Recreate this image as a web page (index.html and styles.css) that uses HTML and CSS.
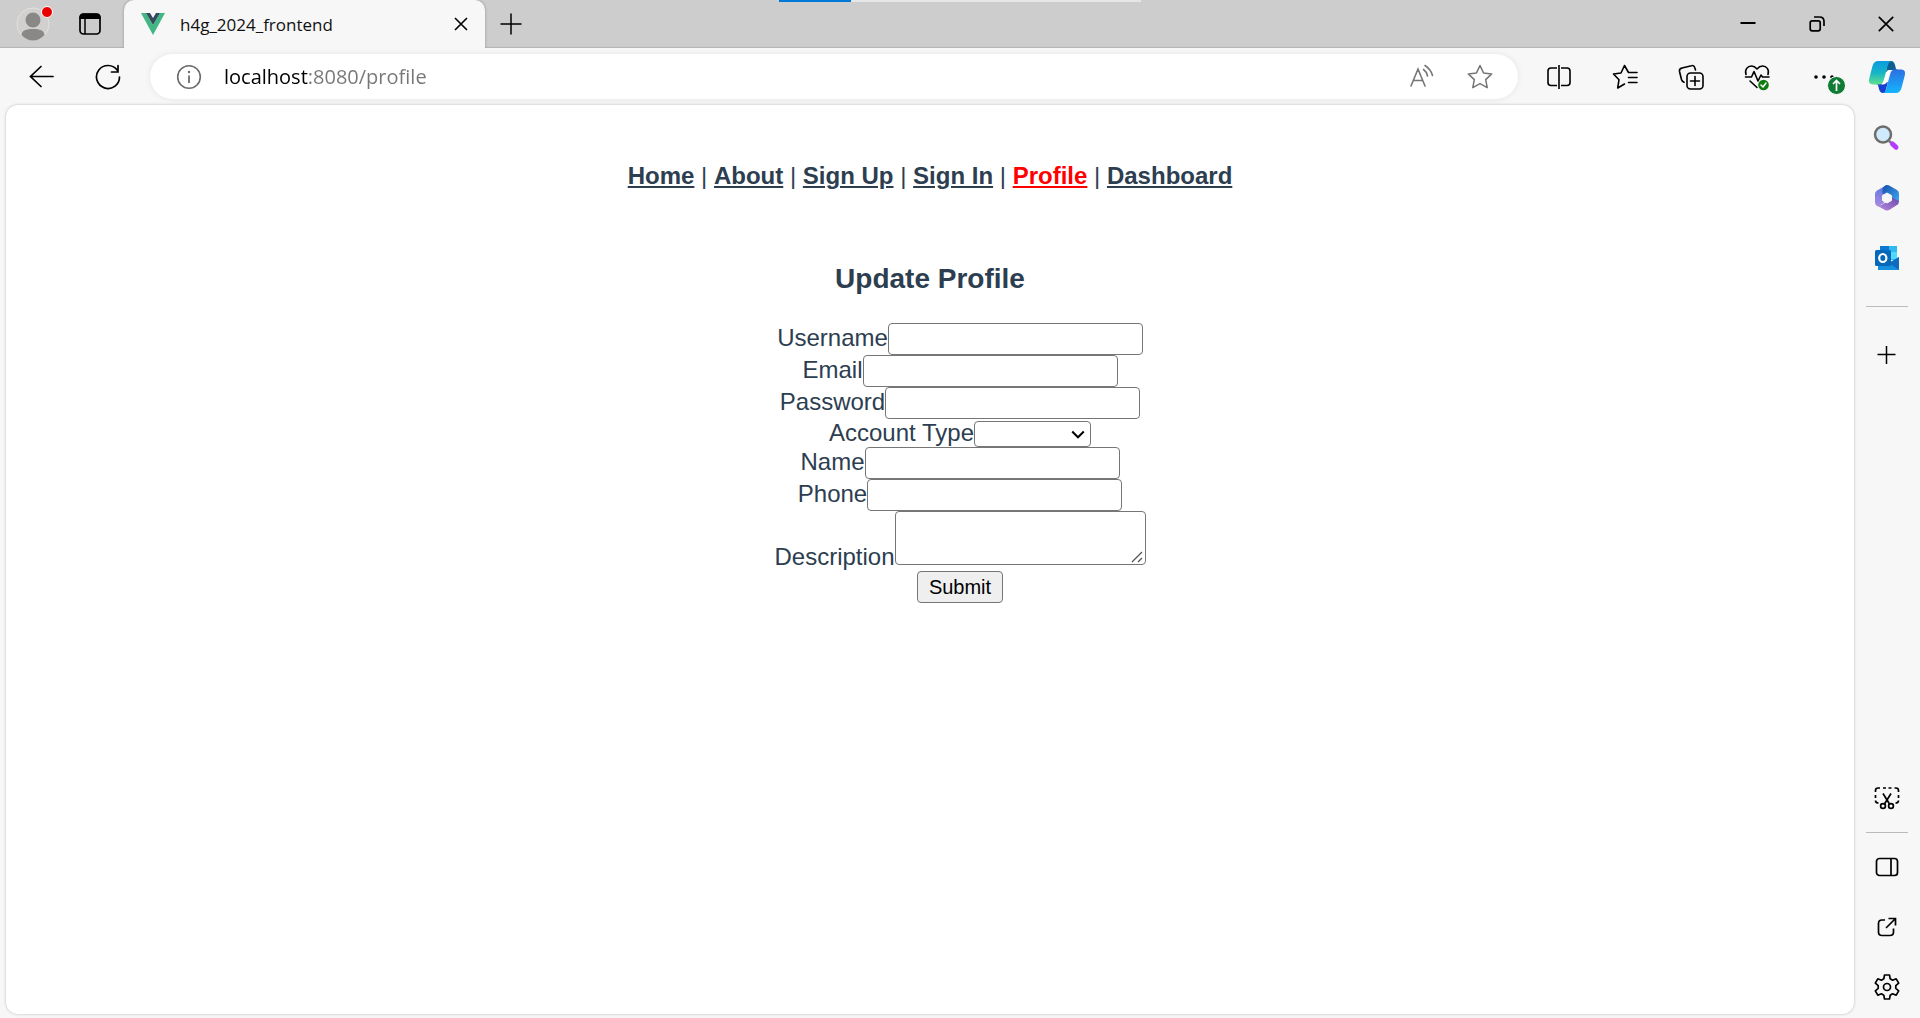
FILE: index.html
```html
<!DOCTYPE html>
<html lang="en">
<head>
  <meta charset="UTF-8">
  <meta name="viewport" content="width=device-width, initial-scale=1.0">
  <title>h4g_2024_frontend</title>
  <link rel="stylesheet" href="styles.css">
</head>
<body>
  <header class="tab-strip">
    <button class="avatar-btn" aria-label="Account">
      <svg width="40" height="40" viewBox="0 0 40 40">
        <circle cx="20" cy="20" r="16" fill="#d2d0ce" stroke="#e4e2e0"/>
        <circle cx="20" cy="16" r="7.5" fill="#8a8886"/>
        <path d="M8.500 31C9 26.500 13 25 20 25s11 1.500 11.500 6C28.500 34.500 24.500 36.500 20 36.500S11.500 34.500 8.500 31z" fill="#8a8886"/>
        <circle cx="34" cy="8" r="5.500" fill="#e60000" stroke="#fff"/>
      </svg>
    </button>
    <button class="workspace-btn" aria-label="Tab actions">
      <svg width="24" height="24" viewBox="0 0 24 24">
        <rect x="2" y="2" width="20" height="20" rx="3.500" fill="none" stroke="#000" stroke-width="1.700"/>
        <path d="M1.500 7V5q0-3.500 3.500-3.500h14q3.500 0 3.500 3.500v2z"/>
        <path d="M7 7v15" stroke="#000" stroke-width="1.500"/>
      </svg>
    </button>
    <div class="tab">
      <svg width="24" height="22" viewBox="0 0 24 22">
        <path d="M0 0h5l7 12 7-12h5L12 22z" fill="#41b883"/>
        <path d="M5 0h4l3 5 3-5h4l-7 12z" fill="#35495e"/>
      </svg>
      <span class="tab-title">h4g_2024_frontend</span>
      <button class="tab-close" aria-label="Close tab">
        <svg width="14" height="14" viewBox="0 0 14 14"><path d="M1 1l12 12M13 1L1 13" stroke="#000" stroke-width="1.600"/></svg>
      </button>
    </div>
    <button class="new-tab" aria-label="New tab">
      <svg width="22" height="22" viewBox="0 0 22 22"><path d="M11 .5v21M.5 11h21" stroke="#000" stroke-width="1.500"/></svg>
    </button>
    <div class="window-buttons">
      <button aria-label="Minimize">
        <svg width="16" height="16" viewBox="0 0 16 16"><path d="M.5 7h15" stroke="#000" stroke-width="2"/></svg>
      </button>
      <button aria-label="Restore">
        <svg width="16" height="16" viewBox="0 0 16 16" fill="none" stroke="#000" stroke-width="1.700">
          <rect x="1.200" y="4.800" width="10" height="10" rx="2"/>
          <path d="M5 1h5.500Q15 1 15 5.500V10"/>
        </svg>
      </button>
      <button aria-label="Close">
        <svg width="16" height="16" viewBox="0 0 16 16"><path d="M.8.8l14.400 14.400M15.200.8L.8 15.200" stroke="#000" stroke-width="1.700"/></svg>
      </button>
    </div>
    <div class="progress"><div class="progress-bar"></div></div>
  </header>

  <div class="toolbar">
    <button class="tool-btn" aria-label="Back">
      <svg width="26" height="26" viewBox="0 0 26 26" fill="none" stroke="#000" stroke-width="1.700" stroke-linecap="round"><path d="M24 12.500H1.500M12 2.500L1.500 12.500 12 22.500"/></svg>
    </button>
    <button class="tool-btn" aria-label="Refresh">
      <svg width="26" height="26" viewBox="0 0 26 26" fill="none" stroke="#000" stroke-width="1.700" stroke-linecap="round"><path d="M24.500 13A11.500 11.500 0 1 1 22.500 6.500M23 1.500V8h-6.500"/></svg>
    </button>
    <div class="address-bar">
      <button class="info-btn" aria-label="Site information">
        <svg width="26" height="26" viewBox="0 0 26 26"><circle cx="13" cy="13" r="11.300" fill="none" stroke="#6b6b6b" stroke-width="1.600"/><path d="M13 11.500v7.500" stroke="#6b6b6b" stroke-width="1.800"/><circle cx="13" cy="8" r="1.200" fill="#6b6b6b"/></svg>
      </button>
      <input class="url" type="text" value="localhost:8080/profile" aria-label="Address">
      <button class="bar-btn" aria-label="Read aloud">
        <svg width="26" height="26" viewBox="0 0 26 26" fill="none" stroke="#767676" stroke-width="1.600" stroke-linecap="round">
          <path d="M3 22L10 5l7 17M5.500 16.500h9M15.500 5.500q3 2 4 6.500M17 1.500q6 4 7.500 10"/>
        </svg>
      </button>
      <button class="bar-btn" aria-label="Add to favorites">
        <svg width="26" height="26" viewBox="0 0 26 26" fill="none" stroke="#767676" stroke-width="1.500" stroke-linejoin="round"><path d="M13 1.500l3.500 7.400 8.200 1-6 5.700 1.500 8.100-7.200-4-7.200 4 1.500-8.100-6-5.700 8.200-1z"/></svg>
      </button>
    </div>
    <button class="tool-btn" aria-label="Split screen">
      <svg width="26" height="26" viewBox="0 0 26 26" fill="none" stroke="#000" stroke-width="1.600"><path d="M13 1v24M11 4H5Q2 4 2 7v11.500q0 3 3 3h6M15 4h6q3 0 3 3v11.500q0 3-3 3h-6"/></svg>
    </button>
    <button class="tool-btn" aria-label="Favorites">
      <svg width="26" height="26" viewBox="0 0 26 26" fill="none" stroke="#000" stroke-width="1.600" stroke-linejoin="round" stroke-linecap="round"><path d="M16.500 8.500L12.500 1.500 9 9 1.500 10l5.500 5.700-1.300 8.300 6.800-4M16.500 8.500h8.500M16.500 13.500h8.500M16.500 18.500h8.500"/></svg>
    </button>
    <button class="tool-btn" aria-label="Collections">
      <svg width="26" height="26" viewBox="0 0 26 26" fill="none" stroke="#000" stroke-width="1.600" stroke-linecap="round"><rect x="9" y="9" width="16" height="16" rx="3.500"/><path d="M17 12.500v9M12.500 17h9M17.500 6l-.7-2.300q-.7-2.700-3.300-2L4 4Q1 4.700 1.500 7.500l2 8q.5 1.800 2.500 2.800"/></svg>
    </button>
    <button class="tool-btn" aria-label="Browser essentials">
      <svg width="28" height="28" viewBox="0 0 28 28" fill="none" stroke="#000" stroke-width="1.600" stroke-linecap="round" stroke-linejoin="round">
        <path d="M3 11.500C1.500 6.500 4.500 3 8.500 3q3 0 5.500 3 2.500-3 5.500-3c4 0 7 3.500 5.500 8.500M2.500 14h6l2.500-5.500 4 9.500 3-6 1.500 2H26M7 18l7 6.500"/>
        <circle cx="20.500" cy="22" r="5.300" fill="#107c10" stroke="none"/><path d="M18 22l2 2 3-4" stroke="#fff" stroke-width="1.500"/>
      </svg>
    </button>
    <button class="tool-btn" aria-label="Settings and more">
      <svg width="44" height="36" viewBox="0 0 44 36">
        <circle cx="15" cy="18" r="1.800"/><circle cx="23" cy="18" r="1.800"/><circle cx="31" cy="18" r="1.800"/>
        <circle cx="35.500" cy="26.500" r="9" fill="#0f7b35" stroke="#f7f7f7"/><path d="M35.500 32V21.500M32 25l3.500-3.500L39 25" fill="none" stroke="#fff" stroke-width="1.700"/>
      </svg>
    </button>
    <button class="copilot-btn" aria-label="Copilot">
      <svg width="38" height="34" viewBox="0 0 38 34">
        <defs>
          <linearGradient id="cp1" x1="0" y1="0" x2="0" y2="1"><stop offset="0" stop-color="#0a9be0"/><stop offset=".5" stop-color="#16b4c8"/><stop offset="1" stop-color="#62e08c"/></linearGradient>
          <linearGradient id="cp2" x1="0" y1="0" x2="0" y2="1"><stop offset="0" stop-color="#2c6fe0"/><stop offset="1" stop-color="#15b5ff"/></linearGradient>
        </defs>
        <path d="M20 1h3q3 0 4 4l1 4q1 1 3 1h-8l-5 2z" fill="#0d5f92"/>
        <path d="M17 33h-2q-3 0-4-4l-1-4q-1-1-3-1h8l5-2z" fill="#183fcf"/>
        <path d="M10 1h14q-3 0-4 3.500L15.500 21q-1 3.500-4.500 3.500H5Q-.5 24.500 1.500 17.500L4.500 6Q6 1 10 1z" fill="url(#cp1)"/>
        <path d="M28 33H14q3 0 4-3.500L22.500 13q1-3.500 4.500-3.500h6q5.500 0 3.500 7L33.500 28Q32 33 28 33z" fill="url(#cp2)"/>
        <path d="M20.500 10H24q-2 .5-3 4l-2.500 8q-.8 2.500-3.500 2.500h-2q2-.5 3-4l2.500-8q.5-2.500 2-2.500z" fill="#fff"/>
      </svg>
    </button>
  </div>

  <div class="main">
    <div class="page">
      <nav>
        <a href="#">Home</a> |
        <a href="#">About</a> |
        <a href="#">Sign Up</a> |
        <a href="#">Sign In</a> |
        <a href="#" class="active">Profile</a> |
        <a href="#">Dashboard</a>
      </nav>
      <h3>Update Profile</h3>
      <form>
        <ul>
          <li><label for="username">Username</label><input type="text" id="username"></li>
          <li><label for="email">Email</label><input type="email" id="email"></li>
          <li><label for="password">Password</label><input type="password" id="password"></li>
          <li><label for="type">Account Type</label><span class="select-wrap"><select id="type"><option value=""></option></select><svg width="14" height="9" viewBox="0 0 14 9"><path d="M1.200 1.500L7 7.300l5.800-5.800" fill="none" stroke="#000" stroke-width="2"/></svg></span></li>
          <li><label for="name">Name</label><input type="text" id="name"></li>
          <li><label for="phone">Phone</label><input type="text" id="phone"></li>
          <li><label for="description">Description</label><span class="area-wrap"><textarea id="description"></textarea><svg width="12" height="12" viewBox="0 0 12 12"><path d="M1 11L11 1M7 11l4-4" stroke="#555" stroke-width="1.300"/></svg></span></li>
          <li><button type="button" class="submit">Submit</button></li>
        </ul>
      </form>
    </div>

    <aside class="sidebar">
      <button aria-label="Search">
        <svg width="28" height="28" viewBox="0 0 28 28">
          <path d="M16 17l4 3.500" stroke="#777" stroke-width="2.500"/>
          <path d="M19.500 20l3.500 3.300" stroke="#b43cff" stroke-width="5" stroke-linecap="round"/>
          <circle cx="10" cy="10.500" r="8" fill="#cfeafc" stroke="#6d6d6a" stroke-width="2.500"/>
        </svg>
      </button>
      <button aria-label="Microsoft 365">
        <svg width="26" height="28" viewBox="0 0 26 28">
          <defs>
            <linearGradient id="m1" x1="0" y1="0" x2="0" y2="1"><stop offset="0" stop-color="#5f78e0"/><stop offset="1" stop-color="#a98be0"/></linearGradient>
            <linearGradient id="m2" x1="0" y1="0" x2="1" y2="1"><stop offset="0" stop-color="#1550ad"/><stop offset="1" stop-color="#41a9f2"/></linearGradient>
            <linearGradient id="m3" x1="1" y1="0" x2="0" y2="1"><stop offset="0" stop-color="#6848a8"/><stop offset="1" stop-color="#b98be0"/></linearGradient>
          </defs>
          <path d="M13 1L3 6.500Q1 7.700 1 10v8q0 3 3 4.500L10 19V8z" fill="url(#m1)"/>
          <path d="M10 2.500Q13 0 16 2l7 4q2 1.200 2 4v8l-8-4.500L8.500 9.500V5q0-1.500 1.500-2.500z" fill="url(#m2)"/>
          <path d="M25 17q0 3-2 4l-7 4.500q-3 2-6 0l-7-4q3.500.5 6-1.500l8-5V13z" fill="url(#m3)"/>
          <path d="M13 9l4.500 2.500v5L13 19l-4.500-2.500v-5z" fill="#f7f7f7" stroke="#f7f7f7" stroke-linejoin="round"/>
        </svg>
      </button>
      <button aria-label="Outlook">
        <svg width="26" height="26" viewBox="0 0 26 26">
          <path d="M6 1h17v14H6z" fill="#32b8f0"/><path d="M6 1h9v6H6z" fill="#0f78d4"/><path d="M15 7h8v7h-8z" fill="#50d9ff"/>
          <path d="M4 12l11 6 10-6v13H4z" fill="#1490df"/><path d="M15 18l10-6v13z" fill="#0f6cbd"/>
          <rect x="1" y="5" width="16" height="16" rx="1.500" fill="#0568b8"/>
          <ellipse cx="8.800" cy="13" rx="3.600" ry="4" fill="none" stroke="#fff" stroke-width="2.200"/>
        </svg>
      </button>
      <hr class="divider-top">
      <button aria-label="Customize">
        <svg width="20" height="20" viewBox="0 0 20 20"><path d="M9.500 1v18M.5 9.500h18" stroke="#000" stroke-width="1.500"/></svg>
      </button>
      <button class="push" aria-label="Screenshot">
        <svg width="26" height="24" viewBox="0 0 26 24" fill="none" stroke="#000" stroke-width="1.700">
          <path d="M1.500 6V4.500Q1.500 2 4 2H6M9 2h3M14.500 2h3M20.500 2H22q2.500 0 2.500 2.500V6M1.500 9v3M24.500 9v3M1.500 14.500q0 2.500 3 2.500M24.500 14.500q0 2.500-3 2.500M9 7.500l6.500 10.500M17 7.500L10.500 18"/>
          <circle cx="9" cy="20" r="2.400"/><circle cx="17" cy="20" r="2.400"/>
        </svg>
      </button>
      <hr class="divider-bottom">
      <button aria-label="Hide sidebar">
        <svg width="24" height="20" viewBox="0 0 24 20" fill="none" stroke="#000" stroke-width="1.700"><rect x="1.500" y="1.500" width="21" height="17" rx="3"/><path d="M16 1.500v17"/></svg>
      </button>
      <button aria-label="Open in new window">
        <svg width="20" height="20" viewBox="0 0 20 20" fill="none" stroke="#000" stroke-width="1.700"><path d="M8 3H5Q1.500 3 1.500 6.500V15q0 3.500 3.500 3.500h8q3.500 0 3.500-3.500v-3.500M11.500 1.500h7v7M18.500 1.500L9 11"/></svg>
      </button>
      <button aria-label="Settings">
        <svg width="28" height="28" viewBox="0 0 28 28" fill="none" stroke="#000" stroke-width="1.700" stroke-linejoin="round">
          <path d="M11.500 2h5l.7 3.800 2.400 1.400 3.600-1.400 2.500 4.400-2.900 2.400v2.800l2.900 2.400-2.500 4.400-3.600-1.400-2.400 1.400-.7 3.800h-5l-.7-3.800-2.400-1.400-3.600 1.400-2.500-4.400 2.900-2.400v-2.800l-2.900-2.400 2.500-4.400 3.600 1.400 2.400-1.400z"/>
          <circle cx="14" cy="14" r="3.500"/>
        </svg>
      </button>
    </aside>
  </div>
</body>
</html>
```
FILE: styles.css
```css
* {
  box-sizing: border-box;
}
body {
  margin: 0;
  height: 100vh;
  display: flex;
  flex-direction: column;
  background: #f7f7f7;
  font-family: "Open Sans", sans-serif;
}
svg {
  display: block;
  flex: none;
}
button {
  font-family: inherit;
}

/* browser chrome */
.tab-strip button,
.toolbar button,
.sidebar button {
  display: flex;
  justify-content: center;
  align-items: center;
  flex: none;
  padding: 0;
  border: none;
  background: none;
}
.tab-strip {
  display: flex;
  align-items: stretch;
  height: 48px;
  background: #cdcdcd;
  box-shadow: inset 0 -2px 1px -1px #b4b4b4;
  position: relative;
}
.tab-strip .avatar-btn {
  width: 66px;
}
.tab-strip .workspace-btn {
  width: 48px;
}
.tab {
  display: flex;
  align-items: center;
  width: 361px;
  margin-left: 10px;
  padding: 0 17px;
  border-radius: 10px 10px 0 0;
  background: #f7f7f7;
  box-shadow: 0 0 3px rgba(0, 0, 0, 0.3);
  clip-path: inset(0 -4px 0 -4px);
}
.tab-title {
  flex: 1;
  margin-left: 15px;
  font-size: 17px;
  color: #111;
}
.tab-strip .new-tab {
  width: 52px;
}
.window-buttons {
  display: flex;
  margin-left: auto;
}
.window-buttons button {
  width: 69px;
}
.progress {
  position: absolute;
  top: 0;
  left: 50%;
  width: 362px;
  height: 2px;
  margin-left: -181px;
  background: #e6e6e6;
}
.progress-bar {
  width: 20%;
  height: 100%;
  background: #0078d7;
}
.toolbar {
  display: flex;
  align-items: center;
  height: 57px;
  padding: 0 2px 0 9px;
}
.toolbar .tool-btn {
  width: 66px;
  height: 44px;
}
.toolbar .copilot-btn {
  width: 62px;
  height: 44px;
}
.address-bar {
  display: flex;
  align-items: center;
  flex: 1;
  height: 45px;
  margin: 0 8px 0 9px;
  padding: 0 9px 0 26px;
  border-radius: 23px;
  background: #fff;
  box-shadow: 0 0 6px rgba(0, 0, 0, 0.08);
}
.url {
  flex: 1;
  min-width: 0;
  margin-left: 22px;
  padding: 0;
  border: none;
  outline: none;
  font-family: inherit;
  font-size: 20px;
  color: transparent;
  /* host in black, the rest of the address in grey */
  background: linear-gradient(to right, #000 84px, #767676 84px);
  -webkit-background-clip: text;
  background-clip: text;
}
.address-bar .bar-btn {
  width: 59px;
}

.main {
  display: flex;
  flex: 1;
  min-height: 0;
}

/* sidebar */
.sidebar {
  display: flex;
  flex-direction: column;
  width: 66px;
  padding: 3px 0 1px;
}
.sidebar button {
  height: 60px;
}
.sidebar .push {
  margin-top: auto;
}
.sidebar hr {
  width: 42px;
  height: 1px;
  border: none;
  background: #bbb;
}
.divider-top {
  margin: 18px auto;
}
.divider-bottom {
  margin: 4px auto;
}

/* page */
.page {
  flex: 1;
  margin: 0 0 4px 6px;
  padding-top: 12px;
  border-radius: 12px;
  background: #fff;
  box-shadow: 0 0 3px rgba(0, 0, 0, 0.25);
  font-family: Arial, "Liberation Sans", sans-serif;
  font-size: 24px;
  text-align: center;
  color: #2c3e50;
}
nav {
  padding: 45px;
}
nav a {
  font-weight: bold;
  color: #2c3e50;
}
nav a.active {
  color: #f00;
}
h3 {
  margin: 28px 0;
  font-size: 28px;
}
ul {
  margin: 0;
  padding: 0 0 0 60px;
  list-style: none;
}
input,
select,
textarea {
  margin: 0;
  font-family: inherit;
  font-size: 20px;
}
li input,
select,
textarea {
  border: 1px solid #767676;
  border-radius: 4px;
  background: #fff;
}
li input {
  width: 255px;
  height: 32px;
  padding: 2px 3px;
}
.select-wrap,
.area-wrap {
  position: relative;
}
select {
  width: 117px;
  height: 26px;
  appearance: none;
}
.select-wrap svg {
  position: absolute;
  right: 6px;
  bottom: 7px;
}
textarea {
  width: 251px;
  height: 54px;
  padding: 3px;
  resize: none;
}
.area-wrap svg {
  position: absolute;
  right: 3px;
  bottom: 7px;
}
.submit {
  height: 32px;
  padding: 0 11px;
  border: 1px solid #767676;
  border-radius: 4px;
  background: #efefef;
  font-size: 20px;
  color: #000;
}
```
